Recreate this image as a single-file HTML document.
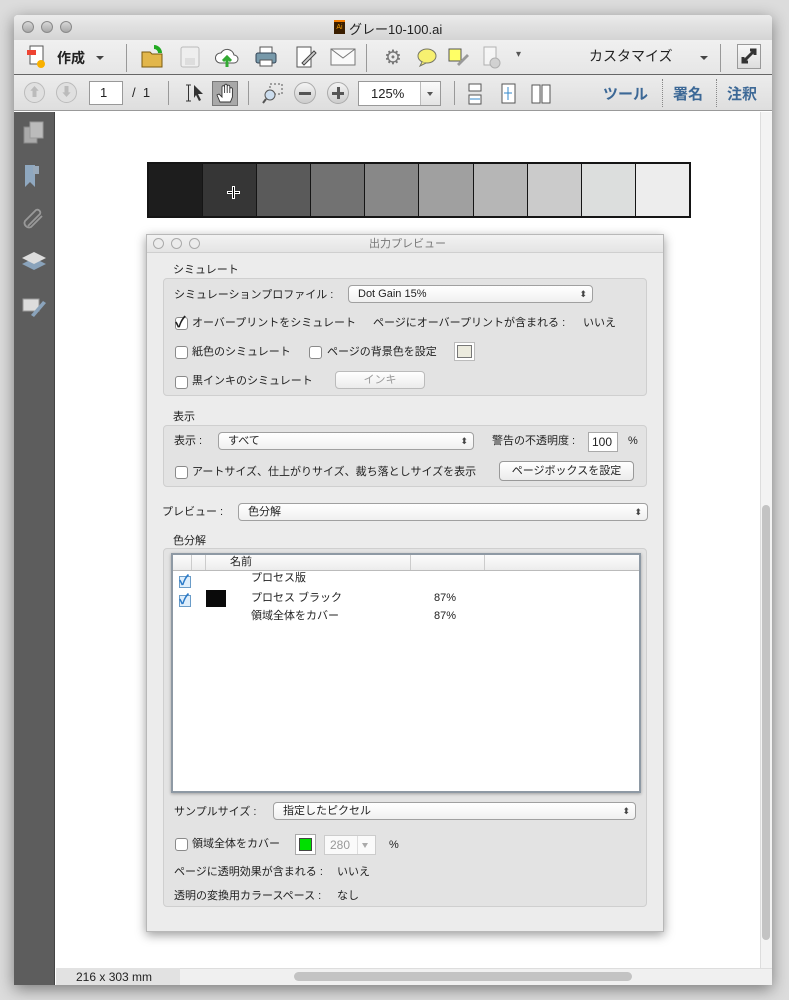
<!DOCTYPE html>
<html><head><meta charset="utf-8">
<style>
*{box-sizing:border-box;margin:0;padding:0}
body{width:789px;height:1000px;background:#dcdcdc;position:relative;overflow:hidden;font-family:"Liberation Sans","Noto Sans CJK JP",sans-serif;font-size:12px;color:#222}
.a{position:absolute}
.win{left:14px;top:15px;width:758px;height:970px;background:#fff;box-shadow:0 4px 16px rgba(0,0,0,.45);border-radius:4px 4px 0 0;overflow:hidden}
.tl{width:12px;height:12px;border-radius:50%;background:linear-gradient(#d8d8d8,#a8a8a8);border:1px solid #8a8a8a}
.dtl{width:11px;height:11px;border-radius:50%;border:1px solid #aaa;background:#ececec}
.sep{width:1px;background:#999}
.cb{width:13px;height:13px;border:1px solid #8a8a8a;border-radius:3px;background:#fff}
.sel{height:18px;border:1px solid #a0a0a0;border-radius:4px;background:linear-gradient(#fff,#f0f0f0);font-size:11px;padding-left:9px;line-height:16px}
.sel:after{content:"⬍";position:absolute;right:5px;top:0;font-size:9px;color:#444}
.btn{height:20px;border:1px solid #999;border-radius:4px;background:linear-gradient(#fff,#ebebeb);text-align:center;line-height:18px;font-size:11px}
.grp{border:1px solid #cfcfcf;border-radius:4px;background:#e3e3e3}
.t{font-size:11px;line-height:14px;white-space:nowrap}
</style></head><body>
<div class="a win">
 <div class="a" style="left:0;top:0;width:758px;height:25px;background:linear-gradient(#ebebeb,#d4d4d4)"></div>
 <div class="a tl" style="left:8px;top:6px"></div>
 <div class="a tl" style="left:27px;top:6px"></div>
 <div class="a tl" style="left:46px;top:6px"></div>
 <div class="a" style="left:320px;top:5px;width:11px;height:14px;background:#3a1e00;border-top:2px solid #f27d00;color:#f7a000;font-size:7px;line-height:12px;text-align:center">Ai</div>
 <div class="a" style="left:335px;top:4px;font-size:13px;color:#222;white-space:nowrap">グレー10-100.ai</div>
 <div class="a" style="left:0;top:25px;width:758px;height:48px;background:linear-gradient(#f0f0f0,#e2e2e2);border-bottom:1px solid #555"></div>
 <div class="a" style="left:0;top:59px;width:758px;height:1px;background:#666"></div>
 <svg class="a" style="left:12px;top:29px" width="22" height="26"><rect x="4" y="2" width="13" height="18" fill="#fff" stroke="#555"/><rect x="1" y="6" width="9" height="5" fill="#e43"/><circle cx="15" cy="20" r="4" fill="#f8b000"/></svg>
 <div class="a" style="left:43px;top:33px;font-size:14px;font-weight:bold;white-space:nowrap">作成</div>
 <div class="a" style="left:82px;top:41px;border:4px solid transparent;border-top:4px solid #444"></div>
 <div class="a sep" style="left:112px;top:29px;height:28px"></div>
 <svg class="a" style="left:126px;top:29px" width="26" height="26"><path d="M2 8h8l2 2h10v13H2z" fill="#e2b64a" stroke="#7a5a10"/><path d="M14 3a6 6 0 0 1 6 6" stroke="#2a2" stroke-width="4" fill="none"/></svg>
 <svg class="a" style="left:165px;top:30px" width="22" height="24"><rect x="2" y="2" width="18" height="20" rx="2" fill="#eee" stroke="#bbb"/><rect x="6" y="13" width="10" height="7" fill="#ddd"/></svg>
 <svg class="a" style="left:200px;top:30px" width="26" height="24"><path d="M6 18a5 5 0 0 1 1-10a7 7 0 0 1 13 2a4 4 0 0 1 0 8z" fill="#fff" stroke="#555"/><path d="M13 22v-9M9 16l4-4 4 4" stroke="#3a3" stroke-width="3" fill="none"/></svg>
 <svg class="a" style="left:240px;top:30px" width="24" height="24"><rect x="6" y="2" width="12" height="7" fill="#fff" stroke="#555"/><rect x="2" y="8" width="20" height="10" rx="2" fill="#79a" stroke="#345"/><rect x="6" y="15" width="12" height="6" fill="#fff" stroke="#555"/></svg>
 <svg class="a" style="left:280px;top:30px" width="24" height="24"><rect x="3" y="2" width="14" height="20" fill="#fff" stroke="#555"/><path d="M8 18l12-12 2 2-12 12z" fill="#ccc" stroke="#444"/></svg>
 <svg class="a" style="left:316px;top:32px" width="26" height="20"><rect x="1" y="2" width="24" height="16" fill="#fafafa" stroke="#777"/><path d="M1 2l12 9 12-9" fill="none" stroke="#777"/></svg>
 <div class="a sep" style="left:352px;top:29px;height:28px"></div>
 <div class="a" style="left:370px;top:30px;font-size:20px;color:#777">⚙</div>
 <svg class="a" style="left:402px;top:31px" width="22" height="22"><ellipse cx="11" cy="10" rx="9" ry="7" fill="#f7f070" stroke="#776"/><path d="M6 16l-2 4 6-3" fill="#f7f070" stroke="#776"/></svg>
 <svg class="a" style="left:433px;top:31px" width="24" height="22"><rect x="2" y="3" width="12" height="12" fill="#ff6" stroke="#555"/><path d="M10 18l10-10 2 2-10 10z" fill="#999"/></svg>
 <svg class="a" style="left:467px;top:31px" width="22" height="24" opacity=".5"><rect x="3" y="1" width="12" height="18" fill="#fff" stroke="#777"/><circle cx="14" cy="17" r="5" fill="#bbb" stroke="#777"/></svg>
 <div class="a" style="left:502px;top:34px;font-size:10px;color:#555">▾</div>
 <div class="a" style="left:575px;top:31px;font-size:14px;white-space:nowrap">カスタマイズ</div>
 <div class="a" style="left:686px;top:41px;border:4px solid transparent;border-top:4px solid #444"></div>
 <div class="a sep" style="left:706px;top:29px;height:28px"></div>
 <div class="a" style="left:723px;top:29px;width:24px;height:25px;border:1px solid #999;background:linear-gradient(#f8f8f8,#ddd)"></div>
 <svg class="a" style="left:727px;top:33px" width="16" height="16"><path d="M2 14l12-12M9 2h5v5M2 9v5h5" stroke="#333" stroke-width="3" fill="none"/></svg>
 <div class="a" style="left:0;top:60px;width:758px;height:36px;background:linear-gradient(#ececec,#dedede);border-bottom:1px solid #999"></div>
 <div class="a" style="left:10px;top:67px;width:21px;height:21px;border-radius:50%;background:#e0e0e0;border:1px solid #bbb;color:#bbb;text-align:center;font-size:12px;line-height:19px">⬆</div>
 <div class="a" style="left:42px;top:67px;width:21px;height:21px;border-radius:50%;background:#e0e0e0;border:1px solid #bbb;color:#bbb;text-align:center;font-size:12px;line-height:19px">⬇</div>
 <div class="a" style="left:75px;top:66px;width:34px;height:24px;background:#fff;border:1px solid #999;font-size:13px;padding-left:10px;line-height:22px">1</div>
 <div class="a" style="left:118px;top:70px;font-size:13px;white-space:nowrap">/&nbsp; 1</div>
 <div class="a sep" style="left:154px;top:66px;height:24px"></div>
 <svg class="a" style="left:170px;top:67px" width="22" height="22"><path d="M2 3h5M4.5 3v16M2 19h5" stroke="#333" fill="none"/><path d="M10 3l9 9h-5l3 6-2 1-3-6-2 3z" fill="#333"/></svg>
 <div class="a" style="left:198px;top:66px;width:26px;height:25px;background:#a8a8a8;border:1px solid #777"></div>
 <svg class="a" style="left:201px;top:68px" width="20" height="21"><path d="M5 19l-3-7 2-1 3 3V4a1.3 1.3 0 0 1 2.6 0v6V2.5a1.3 1.3 0 0 1 2.6 0V10V3.5a1.3 1.3 0 0 1 2.6 0V10V6a1.3 1.3 0 0 1 2.6 0v8l-2 5z" fill="#fff" stroke="#333" stroke-width="0.9"/></svg>
 <div class="a sep" style="left:234px;top:66px;height:24px"></div>
 <svg class="a" style="left:248px;top:68px" width="22" height="22"><rect x="8" y="1" width="12" height="10" fill="none" stroke="#555" stroke-dasharray="2"/><circle cx="8" cy="12" r="5" fill="#cde" stroke="#555"/><path d="M4 16l-3 4" stroke="#555" stroke-width="2"/></svg>
 <div class="a" style="left:280px;top:67px;width:22px;height:22px;border-radius:50%;background:linear-gradient(#f4f4f4,#ccc);border:1px solid #aaa"></div>
 <div class="a" style="left:285px;top:77px;width:12px;height:3px;background:#555"></div>
 <div class="a" style="left:313px;top:67px;width:22px;height:22px;border-radius:50%;background:linear-gradient(#f4f4f4,#ccc);border:1px solid #aaa"></div>
 <div class="a" style="left:318px;top:77px;width:12px;height:3px;background:#555"></div>
 <div class="a" style="left:322.5px;top:72px;width:3px;height:12px;background:#555"></div>
 <div class="a" style="left:344px;top:66px;width:83px;height:25px;background:#fff;border:1px solid #999;font-size:13px;padding-left:12px;line-height:23px">125%</div>
 <div class="a" style="left:406px;top:67px;width:20px;height:23px;border-left:1px solid #bbb;background:linear-gradient(#fafafa,#e4e4e4)"></div>
 <div class="a" style="left:413px;top:77px;border:3px solid transparent;border-top:4px solid #555"></div>
 <div class="a sep" style="left:440px;top:66px;height:24px"></div>
 <svg class="a" style="left:452px;top:67px" width="20" height="24"><rect x="3" y="2" width="12" height="7" fill="#fff" stroke="#555"/><rect x="3" y="13" width="12" height="9" fill="#fff" stroke="#555"/><path d="M4 17h10" stroke="#38c"/></svg>
 <svg class="a" style="left:485px;top:67px" width="20" height="24"><rect x="3" y="2" width="13" height="19" fill="#fff" stroke="#555"/><path d="M9 5v13M5 11h8" stroke="#38c"/></svg>
 <svg class="a" style="left:516px;top:67px" width="22" height="24"><rect x="2" y="3" width="8" height="18" fill="#fff" stroke="#555"/><rect x="12" y="3" width="8" height="18" fill="#fff" stroke="#555"/></svg>
 <div class="a" style="left:589px;top:68px;font-size:15px;font-weight:bold;color:#3c6896;white-space:nowrap">ツール</div>
 <div class="a" style="left:648px;top:64px;height:28px;border-left:1px dotted #888"></div>
 <div class="a" style="left:659px;top:68px;font-size:15px;font-weight:bold;color:#3c6896;white-space:nowrap">署名</div>
 <div class="a" style="left:702px;top:64px;height:28px;border-left:1px dotted #888"></div>
 <div class="a" style="left:713px;top:68px;font-size:15px;font-weight:bold;color:#3c6896;white-space:nowrap">注釈</div>
 <div class="a" style="left:0;top:97px;width:41px;height:873px;background:#5d5d5d;border-right:1px solid #444"></div>
 <svg class="a" style="left:8px;top:105px" width="26" height="26"><rect x="2" y="7" width="13" height="16" fill="#aaa" stroke="#888"/><rect x="8" y="2" width="13" height="16" fill="#bbb" stroke="#999"/></svg>
 <svg class="a" style="left:8px;top:148px" width="26" height="26"><path d="M3 2h10v22l-5-5-5 5z" fill="#8fa8c0"/><rect x="11" y="3" width="6" height="8" fill="#9ab"/></svg>
 <svg class="a" style="left:8px;top:190px" width="26" height="26"><path d="M6 21l12-12a3 3 0 0 0-4-4L3 16a4.5 4.5 0 0 0 6 6l11-11" fill="none" stroke="#999" stroke-width="1.8"/></svg>
 <svg class="a" style="left:6px;top:234px" width="28" height="26"><path d="M14 9l12 6-12 6-12-6z" fill="#8aa3bb"/><path d="M14 3l12 6-12 6-12-6z" fill="#ddd"/></svg>
 <svg class="a" style="left:7px;top:278px" width="28" height="26"><rect x="2" y="6" width="16" height="12" fill="#ddd" stroke="#999"/><path d="M10 22l12-14 3 2-12 14z" fill="#8aa3bb"/></svg>
 <div class="a" style="left:42px;top:97px;width:704px;height:856px;background:#fff"></div>
 <div class="a" style="left:133px;top:147px;width:544px;height:56px;background:#151515;border:2px solid #151515;display:flex;gap:1px">
  <div style="flex:1;background:#1d1d1d"></div><div style="flex:1;background:#363636"></div><div style="flex:1;background:#5a5a5a"></div><div style="flex:1;background:#727272"></div><div style="flex:1;background:#888"></div><div style="flex:1;background:#a0a0a0"></div><div style="flex:1;background:#b6b6b6"></div><div style="flex:1;background:#cbcbcb"></div><div style="flex:1;background:#dcdedd"></div><div style="flex:1;background:#ededed"></div>
 </div>
 <div class="a" style="left:213px;top:176px;width:13px;height:3px;border:1px solid #fff;background:#000"></div>
 <div class="a" style="left:218px;top:171px;width:3px;height:13px;border:1px solid #fff;background:#000"></div>
 <div class="a" style="left:746px;top:97px;width:12px;height:856px;background:#f3f3f3;border-left:1px solid #ddd"></div>
 <div class="a" style="left:748px;top:490px;width:8px;height:435px;border-radius:4px;background:#c3c3c3"></div>
 <div class="a" style="left:42px;top:953px;width:716px;height:17px;background:#f0f0f0;border-top:1px solid #ddd"></div>
 <div class="a" style="left:42px;top:953px;width:124px;height:17px;background:#e2e2e2"></div>
 <div class="a t" style="left:62px;top:955px;font-size:12px">216 x 303 mm</div>
 <div class="a" style="left:280px;top:957px;width:338px;height:9px;border-radius:5px;background:#c3c3c3"></div>
</div>

<div class="a" style="left:146px;top:234px;width:518px;height:698px;background:#ececec;border:1px solid #b8b8b8;box-shadow:0 3px 10px rgba(0,0,0,.4)">
 <div class="a" style="left:0;top:0;width:516px;height:18px;background:linear-gradient(#f2f2f2,#e4e4e4);border-bottom:1px solid #cfcfcf"></div>
 <div class="a dtl" style="left:6px;top:3px"></div>
 <div class="a dtl" style="left:24px;top:3px"></div>
 <div class="a dtl" style="left:42px;top:3px"></div>
 <div class="a t" style="left:222px;top:2px;color:#777">出力プレビュー</div>

 <div class="a t" style="left:26px;top:28px">シミュレート</div>
 <div class="a grp" style="left:16px;top:43px;width:484px;height:118px"></div>
 <div class="a t" style="left:27px;top:53px">シミュレーションプロファイル :</div>
 <div class="a sel" style="left:201px;top:50px;width:245px">Dot Gain 15%</div>
 <div class="a cb" style="left:28px;top:82px"></div><div class="a" style="left:28px;top:76px;font-size:15px;font-weight:bold">✓</div>
 <div class="a t" style="left:45px;top:81px">オーバープリントをシミュレート</div>
 <div class="a t" style="left:226px;top:81px">ページにオーバープリントが含まれる :</div>
 <div class="a t" style="left:436px;top:81px">いいえ</div>
 <div class="a cb" style="left:28px;top:111px"></div>
 <div class="a t" style="left:45px;top:110px">紙色のシミュレート</div>
 <div class="a cb" style="left:162px;top:111px"></div>
 <div class="a t" style="left:180px;top:110px">ページの背景色を設定</div>
 <div class="a" style="left:307px;top:107px;width:21px;height:19px;border:1px solid #bbb;background:#fff;padding:2px"><div style="width:100%;height:100%;background:#ecebde;border:1px solid #777"></div></div>
 <div class="a cb" style="left:28px;top:141px"></div>
 <div class="a t" style="left:45px;top:139px">黒インキのシミュレート</div>
 <div class="a btn" style="left:188px;top:136px;width:90px;height:18px;line-height:16px;color:#999;border-color:#bbb">インキ</div>

 <div class="a t" style="left:26px;top:175px">表示</div>
 <div class="a grp" style="left:16px;top:190px;width:484px;height:62px"></div>
 <div class="a t" style="left:27px;top:199px">表示 :</div>
 <div class="a sel" style="left:71px;top:197px;width:256px">すべて</div>
 <div class="a t" style="left:345px;top:199px">警告の不透明度 :</div>
 <div class="a" style="left:441px;top:197px;width:30px;height:20px;background:#fff;border:1px solid #aaa;font-size:12px;padding-left:3px;line-height:18px">100</div>
 <div class="a t" style="left:481px;top:199px">%</div>
 <div class="a cb" style="left:28px;top:231px"></div>
 <div class="a t" style="left:45px;top:230px">アートサイズ、仕上がりサイズ、裁ち落としサイズを表示</div>
 <div class="a btn" style="left:352px;top:226px;width:135px">ページボックスを設定</div>

 <div class="a t" style="left:15px;top:270px">プレビュー :</div>
 <div class="a sel" style="left:91px;top:268px;width:410px">色分解</div>

 <div class="a t" style="left:26px;top:299px">色分解</div>
 <div class="a grp" style="left:16px;top:313px;width:484px;height:359px"></div>
 <div class="a" style="left:24px;top:318px;width:470px;height:240px;background:#fff;border:2px solid #8e99a4;box-shadow:0 1px 3px rgba(0,0,0,.3)"></div>
 <div class="a" style="left:26px;top:320px;width:466px;height:16px;background:linear-gradient(#fcfcfc,#ececec);border-bottom:1px solid #bbb"></div>
 <div class="a" style="left:44px;top:320px;width:1px;height:15px;background:#ccc"></div>
 <div class="a" style="left:58px;top:320px;width:1px;height:15px;background:#ccc"></div>
 <div class="a" style="left:263px;top:320px;width:1px;height:15px;background:#ccc"></div>
 <div class="a" style="left:337px;top:320px;width:1px;height:15px;background:#ccc"></div>
 <div class="a t" style="left:83px;top:320px">名前</div>
 <div class="a" style="left:32px;top:341px;width:12px;height:12px;border:1px solid #6a9cc8;background:#dfeefb"></div><div class="a" style="left:32px;top:335px;color:#2a7ac8;font-size:14px;font-weight:bold">✓</div>
 <div class="a" style="left:32px;top:360px;width:12px;height:12px;border:1px solid #6a9cc8;background:#dfeefb"></div><div class="a" style="left:32px;top:354px;color:#2a7ac8;font-size:14px;font-weight:bold">✓</div>
 <div class="a t" style="left:104px;top:336px">プロセス版</div>
 <div class="a" style="left:59px;top:355px;width:20px;height:17px;background:#0a0a0a"></div>
 <div class="a t" style="left:104px;top:356px">プロセス ブラック</div>
 <div class="a t" style="left:287px;top:356px">87%</div>
 <div class="a t" style="left:104px;top:374px">領域全体をカバー</div>
 <div class="a t" style="left:287px;top:374px">87%</div>

 <div class="a t" style="left:27px;top:570px">サンプルサイズ :</div>
 <div class="a sel" style="left:126px;top:567px;width:363px">指定したピクセル</div>
 <div class="a cb" style="left:28px;top:603px"></div>
 <div class="a t" style="left:45px;top:602px">領域全体をカバー</div>
 <div class="a" style="left:148px;top:599px;width:21px;height:21px;border:1px solid #aaa;background:#fff;padding:3px"><div style="width:100%;height:100%;background:#00e000;border:1px solid #444"></div></div>
 <div class="a" style="left:177px;top:600px;width:52px;height:20px;background:#fafafa;border:1px solid #ccc;color:#999;font-size:12px;padding-left:5px;line-height:18px">280</div>
 <div class="a" style="left:210px;top:601px;width:18px;height:18px;border-left:1px solid #ddd"></div>
 <div class="a" style="left:215px;top:608px;border:3px solid transparent;border-top:5px solid #aaa"></div>
 <div class="a t" style="left:242px;top:603px">%</div>
 <div class="a t" style="left:27px;top:630px">ページに透明効果が含まれる :</div>
 <div class="a t" style="left:190px;top:630px">いいえ</div>
 <div class="a t" style="left:27px;top:654px">透明の変換用カラースペース :</div>
 <div class="a t" style="left:190px;top:654px">なし</div>
</div>
</body></html>
